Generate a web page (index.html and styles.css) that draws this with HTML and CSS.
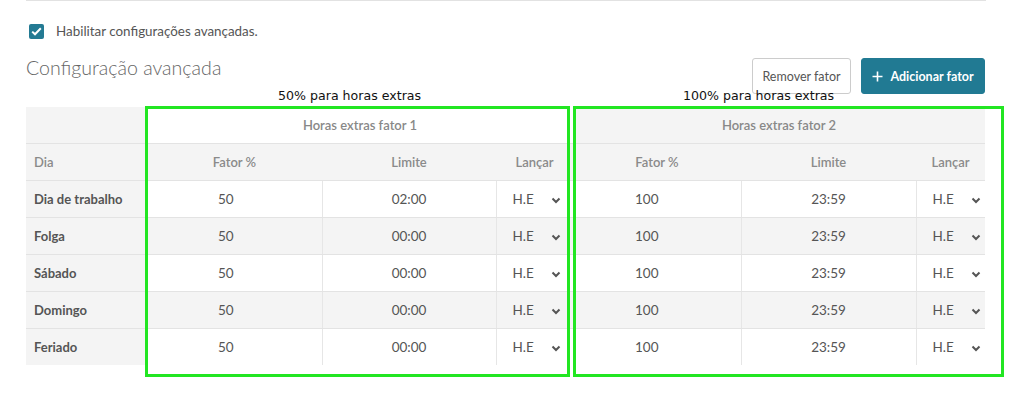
FILE: index.html
```html
<!DOCTYPE html>
<html lang="pt">
<head>
<meta charset="utf-8">
<link rel="stylesheet" href="styles.css">
</head>
<body>
<div class="page">
  <div class="rule"></div>
  <label class="check-row">
    <span class="checkbox"><svg width="11" height="9" viewBox="0 0 11 9"><path d="M1.2 4.6 L4 7.3 L9.8 1.3" fill="none" stroke="#fff" stroke-width="2"/></svg></span>
    <span class="check-label">Habilitar configurações avançadas.</span>
  </label>
  <div class="head-row">
    <h2 class="title">Configuração avançada</h2>
    <div class="actions">
      <button class="btn btn-default">Remover fator</button>
      <button class="btn btn-primary"><svg width="11" height="11" viewBox="0 0 11 11"><path d="M5.5 0.5 V10.5 M0.5 5.5 H10.5" stroke="#fff" stroke-width="1.6"/></svg>Adicionar fator</button>
    </div>
  </div>
  <div class="table-wrap">
    <table class="grid">
      <colgroup>
        <col class="c-dia"><col class="c-f1"><col class="c-l1"><col class="c-h1"><col class="c-f2"><col class="c-l2"><col class="c-h2">
      </colgroup>
      <thead>
        <tr class="group-row">
          <th class="gray"></th>
          <th colspan="3" class="grp white">Horas extras fator 1</th>
          <th colspan="3" class="grp gray">Horas extras fator 2</th>
        </tr>
        <tr class="col-row">
          <th class="dia-h">Dia</th>
          <th>Fator %</th><th>Limite</th><th>Lançar</th>
          <th>Fator %</th><th>Limite</th><th>Lançar</th>
        </tr>
      </thead>
      <tbody>
        <tr><td class="dia">Dia de trabalho</td><td class="fat1">50</td><td class="lim">02:00</td><td class="sel"><span>H.E</span><svg class="chev" width="10" height="7" viewBox="0 0 10 7"><path d="M1.5 1.5 L5 5 L8.5 1.5" fill="none" stroke="#555" stroke-width="2"/></svg></td><td class="fat2">100</td><td class="lim">23:59</td><td class="sel"><span>H.E</span><svg class="chev" width="10" height="7" viewBox="0 0 10 7"><path d="M1.5 1.5 L5 5 L8.5 1.5" fill="none" stroke="#555" stroke-width="2"/></svg></td></tr>
        <tr class="alt"><td class="dia">Folga</td><td class="fat1">50</td><td class="lim">00:00</td><td class="sel"><span>H.E</span><svg class="chev" width="10" height="7" viewBox="0 0 10 7"><path d="M1.5 1.5 L5 5 L8.5 1.5" fill="none" stroke="#555" stroke-width="2"/></svg></td><td class="fat2">100</td><td class="lim">23:59</td><td class="sel"><span>H.E</span><svg class="chev" width="10" height="7" viewBox="0 0 10 7"><path d="M1.5 1.5 L5 5 L8.5 1.5" fill="none" stroke="#555" stroke-width="2"/></svg></td></tr>
        <tr><td class="dia">Sábado</td><td class="fat1">50</td><td class="lim">00:00</td><td class="sel"><span>H.E</span><svg class="chev" width="10" height="7" viewBox="0 0 10 7"><path d="M1.5 1.5 L5 5 L8.5 1.5" fill="none" stroke="#555" stroke-width="2"/></svg></td><td class="fat2">100</td><td class="lim">23:59</td><td class="sel"><span>H.E</span><svg class="chev" width="10" height="7" viewBox="0 0 10 7"><path d="M1.5 1.5 L5 5 L8.5 1.5" fill="none" stroke="#555" stroke-width="2"/></svg></td></tr>
        <tr class="alt"><td class="dia">Domingo</td><td class="fat1">50</td><td class="lim">00:00</td><td class="sel"><span>H.E</span><svg class="chev" width="10" height="7" viewBox="0 0 10 7"><path d="M1.5 1.5 L5 5 L8.5 1.5" fill="none" stroke="#555" stroke-width="2"/></svg></td><td class="fat2">100</td><td class="lim">23:59</td><td class="sel"><span>H.E</span><svg class="chev" width="10" height="7" viewBox="0 0 10 7"><path d="M1.5 1.5 L5 5 L8.5 1.5" fill="none" stroke="#555" stroke-width="2"/></svg></td></tr>
        <tr class="last"><td class="dia">Feriado</td><td class="fat1">50</td><td class="lim">00:00</td><td class="sel"><span>H.E</span><svg class="chev" width="10" height="7" viewBox="0 0 10 7"><path d="M1.5 1.5 L5 5 L8.5 1.5" fill="none" stroke="#555" stroke-width="2"/></svg></td><td class="fat2">100</td><td class="lim">23:59</td><td class="sel"><span>H.E</span><svg class="chev" width="10" height="7" viewBox="0 0 10 7"><path d="M1.5 1.5 L5 5 L8.5 1.5" fill="none" stroke="#555" stroke-width="2"/></svg></td></tr>
      </tbody>
    </table>
    <div class="note note-1">50% para horas extras</div>
    <div class="note note-2">100% para horas extras</div>
    <div class="box box-1"></div>
    <div class="box box-2"></div>
  </div>
</div>
</body>
</html>
```

FILE: styles.css
```css
* { box-sizing: border-box; }
html, body { margin: 0; padding: 0; background: #fff; }
body {
  font-family: "Lato", "Open Sans", sans-serif;
  color: #555;
  font-size: 13px;
}
.page {
  width: 1014px;
  min-height: 399px;
  padding: 0 29px 0 26px;
}
.rule {
  height: 1px;
  background: #e2e2e2;
  width: 960px;
}
.check-row {
  display: flex;
  align-items: center;
  gap: 12px;
  margin-top: 22px;
  padding-left: 3px;
  height: 16px;
}
.checkbox {
  width: 15px;
  height: 15px;
  border-radius: 2px;
  background: #237a93;
  display: flex;
  align-items: center;
  justify-content: center;
}
.check-label {
  font-size: 13.4px;
  color: #555;
}
.head-row {
  display: flex;
  justify-content: space-between;
  align-items: flex-start;
  margin-top: 19px;
  width: 959px;
}
.title {
  margin: -2px 0 0 0;
  font-weight: 300;
  font-size: 19.6px;
  color: #666;
  line-height: 24px;
}
.actions {
  display: flex;
  gap: 10px;
}
.btn {
  font-family: inherit;
  font-size: 12.5px;
  height: 36px;
  border-radius: 3px;
  cursor: pointer;
  display: flex;
  align-items: center;
  gap: 7px;
  white-space: nowrap;
}
.btn-default {
  background: #fff;
  border: 1px solid #ccc;
  color: #555;
  padding: 0 6px;
  width: 99px;
  justify-content: center;
}
.btn-primary {
  background: #217a93;
  border: 1px solid #217a93;
  color: #fff;
  font-weight: 700;
  padding: 0 6px;
  width: 124px;
  justify-content: center;
}
.table-wrap {
  position: relative;
  margin-top: 13px;
  width: 959px;
}
.grid {
  border-collapse: collapse;
  table-layout: fixed;
  width: 959px;
}
.c-dia { width: 121px; }
.c-f1 { width: 175px; }
.c-l1 { width: 174px; }
.c-h1 { width: 77px; }
.c-f2 { width: 168px; }
.c-l2 { width: 175px; }
.c-h2 { width: 69px; }
.grid th, .grid td {
  height: 37px;
  padding: 0;
  border-bottom: 1px solid #e3e3e3;
  font-weight: 400;
  white-space: nowrap;
}
.grid .group-row th { height: 36px; }
.grid th {
  color: #888;
  font-weight: 700;
  font-size: 13px;
  background: #f4f4f4;
  text-align: center;
}
.grid th.white { background: #fff; }
.grid th.gray { background: #f4f4f4; }
.grid .col-row th { color: #8a8a8a; font-weight: 600; }
.grid .col-row th.dia-h { text-align: left; padding-left: 8px; }
.grid .grp { font-weight: 600; }
.grid td {
  background: #fff;
  color: #555;
  font-size: 13.5px;
}
.grid tr.alt td { background: #f4f4f4; }
.grid td.dia {
  background: #f4f4f4;
  font-weight: 700;
  padding-left: 8px;
  font-size: 13px;
}
.grid tr.last td { border-bottom: none; }
.grid td.fat1 { padding-left: 71px; }
.grid td.fat2 { padding-left: 62px; }
.grid td.lim {
  text-align: center;
  border-left: 1px solid #e6e6e6;
  border-right: 1px solid #e6e6e6;
}
.grid td.sel { padding-left: 16px; }
.grid td.sel span { display: inline-block; width: 38px; }
.chev { vertical-align: middle; }
.note {
  position: absolute;
  top: -19px;
  font-family: "DejaVu Sans", sans-serif;
  font-size: 12.6px;
  color: #111;
}
.note-1 { left: 252px; }
.note-2 { left: 657px; }
.box {
  position: absolute;
  border: 3px solid #22e622;
  top: -1px;
  height: 271px;
}
.box-1 { left: 119px; width: 425px; }
.box-2 { left: 547px; width: 431px; }
```
